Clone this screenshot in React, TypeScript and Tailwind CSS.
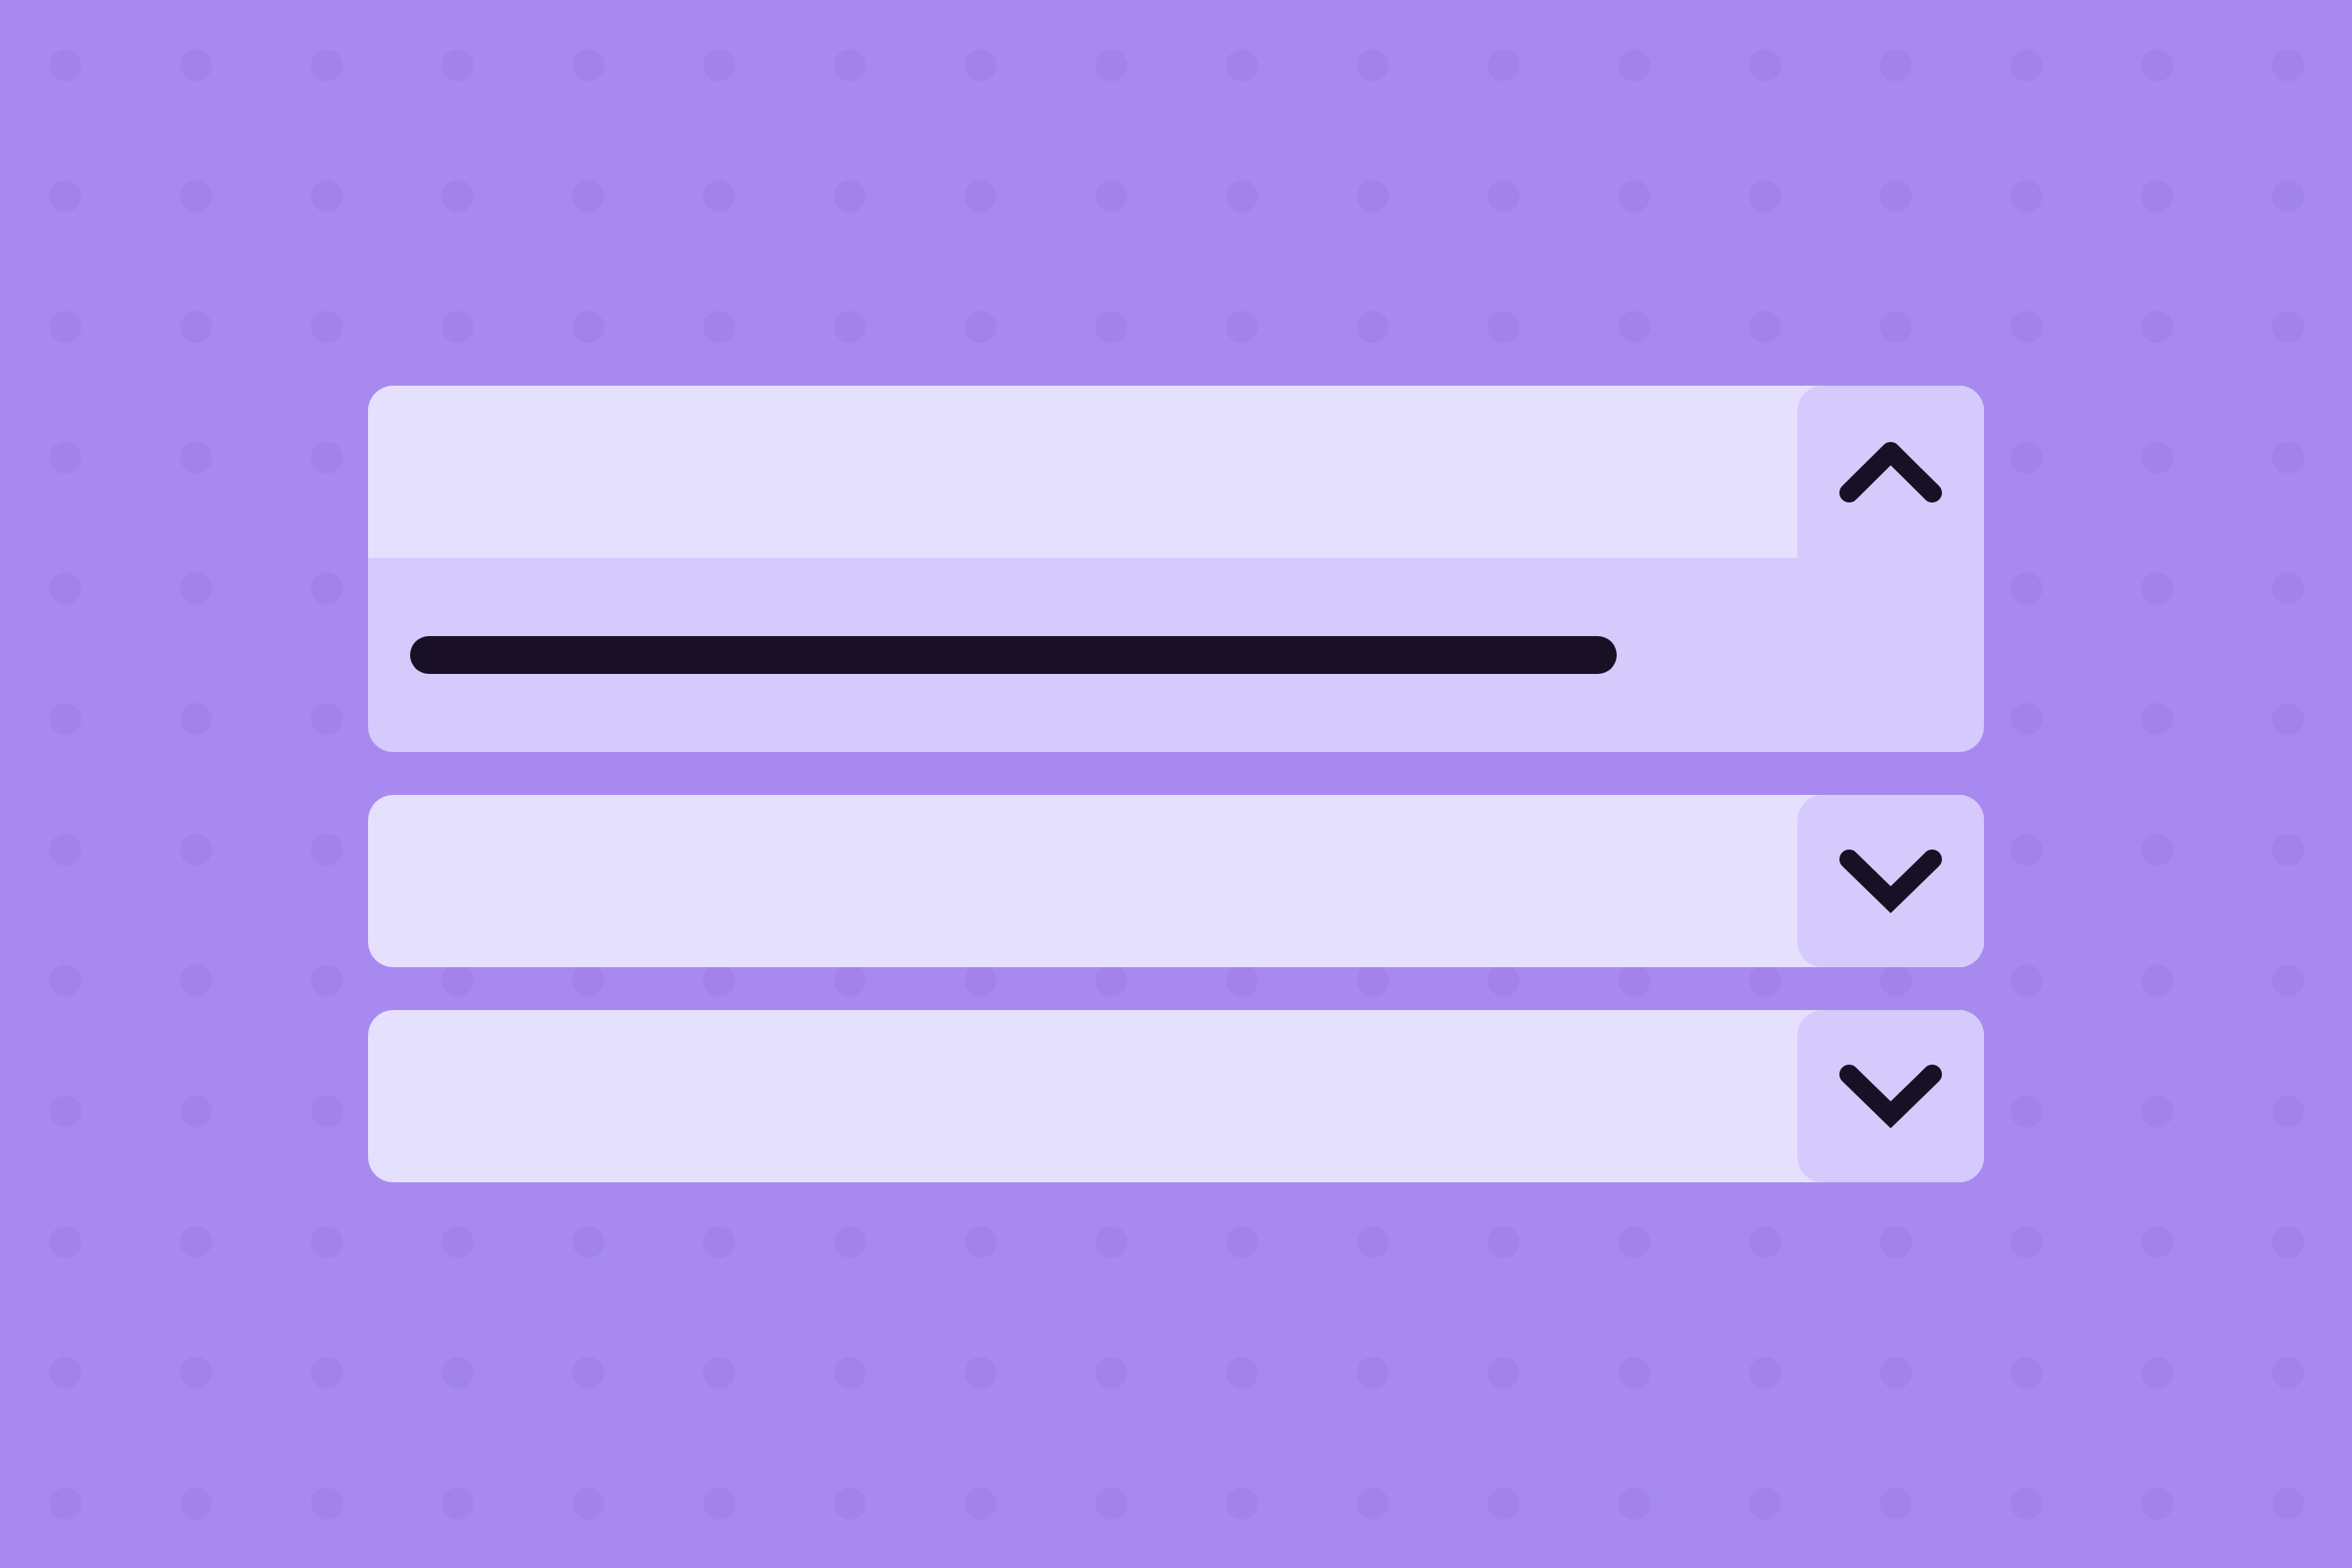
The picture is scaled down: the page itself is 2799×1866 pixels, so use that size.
const ChevronUp = () => (
	<svg width="122" height="72" viewBox="0 0 122 72" fill="none">
		<polyline
			points="11.5,60.5 61,11.5 110.5,60.5"
			stroke="#1a1026"
			strokeWidth="23"
			strokeLinecap="round"
			strokeLinejoin="round"
		/>
	</svg>
);

const ChevronDown = () => (
	<svg width="122" height="76" viewBox="0 0 122 76" fill="none">
		<polyline
			points="11.5,11.5 61,59.7 110.5,11.5"
			stroke="#1a1026"
			strokeWidth="23"
			strokeLinecap="round"
			strokeLinejoin="miter"
		/>
	</svg>
);

const ClosedItem = () => (
	<div className="flex h-[205px] w-full rounded-[30px] bg-[#e5e0fe]">
		<div className="flex-1" />
		<div className="flex w-[222px] items-center justify-center rounded-[30px] bg-[#d5cafb]">
			<ChevronDown />
		</div>
	</div>
);

export default function App() {
	return (
		<div className="flex h-screen w-full items-center justify-center bg-[#a889f0] [background-image:radial-gradient(circle,#a283e9_18.5px,transparent_19.5px)] [background-size:155.6px_155.6px]">
			<div className="flex w-[1923px] flex-col gap-[51px]">
				{/* open item */}
				<div className="flex flex-col overflow-hidden rounded-[30px] bg-[#d5cafb]">
					<div className="flex h-[205px] bg-[#e5e0fe]">
						<div className="flex-1" />
						<div className="flex w-[222px] items-center justify-center rounded-tl-[30px] bg-[#d5cafb]">
							<ChevronUp />
						</div>
					</div>
					<div className="px-[50px] py-[93px]">
						<div className="h-[45px] w-[1436px] rounded-full bg-[#1a1026]" />
					</div>
				</div>

				<ClosedItem />
				<ClosedItem />
			</div>
		</div>
	);
}
